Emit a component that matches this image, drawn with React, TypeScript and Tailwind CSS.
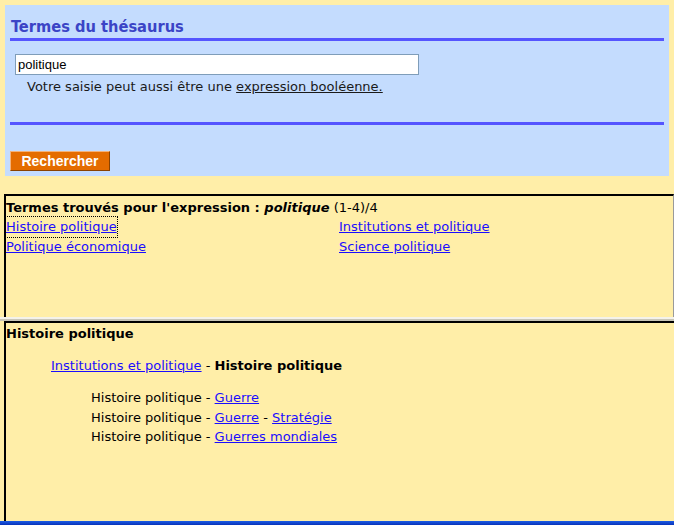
import React from 'react';

const font = { fontFamily: '"DejaVu Sans", Verdana, sans-serif' };
const condensed = { fontFamily: '"DejaVu Sans Condensed", "DejaVu Sans", sans-serif' };

const foundTerms = [
  ['Histoire politique', 'Institutions et politique'],
  ['Politique économique', 'Science politique'],
];

const App = () => {
  return (
    <div
      className="w-[674px] h-[525px] bg-[#ffeea8] flex flex-col overflow-hidden text-[13px] text-black"
      style={font}
    >
      {/* Search panel */}
      <div className="ml-[5px] mt-[5px] w-[664px] h-[171px] bg-[#c4dcfe] px-[5px] pt-[13px]">
        <h1 className="text-[16.3px] font-bold text-[#3b44c6] leading-[18px] pl-[1px]" style={condensed}>
          Termes du thésaurus
        </h1>
        <div className="mt-[2px] h-[3px] bg-[#5555ff]" />
        <div className="pl-[5px] pt-[13px]">
          <input
            defaultValue="politique"
            className="w-[404px] h-[21px] bg-white border border-[#7f9db9] px-[2px] text-[13px] outline-none"
            style={{ fontFamily: '"Liberation Sans", Arial, sans-serif' }}
          />
          <p className="pl-[12px] mt-[4px] text-[#1a1a1a] leading-[16px]">
            Votre saisie peut aussi être une <span className="underline">expression booléenne.</span>
          </p>
        </div>
        <div className="mt-[27px] h-[3px] bg-[#5555ff]" />
        <button
          className="mt-[26px] w-[100px] h-[20px] bg-[#e46c00] text-white font-bold text-[14px] leading-[18px] border border-t-[#f3b27a] border-l-[#f3b27a] border-r-[#8a4200] border-b-[#8a4200]"
          style={{ fontFamily: '"Liberation Sans", Arial, sans-serif' }}
        >
          Rechercher
        </button>
      </div>

      {/* Results frame */}
      <div className="mt-[18px] ml-[4px] h-[123px] border-t-2 border-l-2 border-black border-r border-r-[#9a9a9a] pt-[3px]">
        <div className="leading-[18px]">
          <span className="font-bold">Termes trouvés pour l'expression : </span>
          <span className="font-bold italic">politique</span> (1-4)/4
        </div>
        {foundTerms.map((row, i) => (
          <div key={i} className="grid grid-cols-[333px_1fr] leading-[20px]">
            {row.map((t, j) => (
              <a
                key={t}
                href="#"
                className={`text-[#1a0dff] underline w-fit ${i === 0 && j === 0 ? 'outline outline-1 outline-dotted outline-black' : ''}`}
              >
                {t}
              </a>
            ))}
          </div>
        ))}
      </div>

      {/* Separator */}
      <div className="h-[2px] bg-[#f4f2ea]" />
      <div className="h-[2px] bg-[#c9c6b8]" />

      {/* Detail frame */}
      <div className="flex-1 ml-[4px] border-t-2 border-l-2 border-black pt-[2px]">
        <div className="font-bold leading-[18px]">Histoire politique</div>
        <div className="pl-[45px] mt-[14px] leading-[18px]">
          <a href="#" className="text-[#1a0dff] underline">Institutions et politique</a>
          {' - '}
          <span className="font-bold">Histoire politique</span>
        </div>
        <div className="pl-[85px] mt-[13px] leading-[19.5px]">
          <div>
            Histoire politique - <a href="#" className="text-[#1a0dff] underline">Guerre</a>
          </div>
          <div>
            Histoire politique - <a href="#" className="text-[#1a0dff] underline">Guerre</a>
            {' - '}
            <a href="#" className="text-[#1a0dff] underline">Stratégie</a>
          </div>
          <div>
            Histoire politique - <a href="#" className="text-[#1a0dff] underline">Guerres mondiales</a>
          </div>
        </div>
      </div>

      <div className="h-[4px] bg-gradient-to-b from-[#1d5ce6] to-[#0a32b8]" />
    </div>
  );
};

export default App;
